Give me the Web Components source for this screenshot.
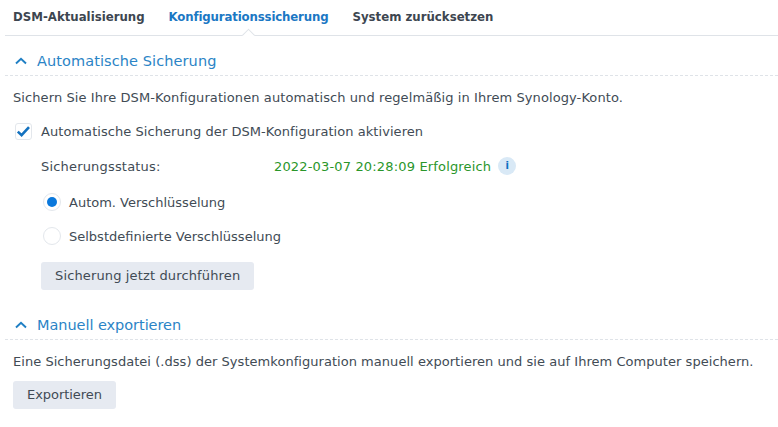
<!DOCTYPE html>
<html><head><meta charset="utf-8"><style>
html,body{margin:0;padding:0;background:#fff}
body{font-family:"DejaVu Sans",sans-serif;font-size:13px;color:#414b55;width:778px;height:427px;overflow:hidden}
</style></head><body>
<dsm-page>
<tab-bar>
<tab-item>DSM-Aktualisierung</tab-item>
<tab-item active style="letter-spacing:-.15px">Konfigurationssicherung</tab-item>
<tab-item>System zurücksetzen</tab-item>
</tab-bar>
<fold-section title="Automatische Sicherung" style="letter-spacing:.09px">
<text-line>Sichern Sie Ihre DSM-Konfigurationen automatisch und regelmäßig in Ihrem Synology-Konto.</text-line>
<check-row style="letter-spacing:.055px">Automatische Sicherung der DSM-Konfiguration aktivieren</check-row>
<status-row></status-row>
<radio-row checked style="letter-spacing:0">Autom. Verschlüsselung</radio-row>
<radio-row style="letter-spacing:0">Selbstdefinierte Verschlüsselung</radio-row>
<dsm-button indent style="letter-spacing:.14px">Sicherung jetzt durchführen</dsm-button>
</fold-section>
<fold-section title="Manuell exportieren" second style="letter-spacing:-.05px">
<text-line style="letter-spacing:.04px">Eine Sicherungsdatei (.dss) der Systemkonfiguration manuell exportieren und sie auf Ihrem Computer speichern.</text-line>
<dsm-button style="letter-spacing:-.05px">Exportieren</dsm-button>
</fold-section>
</dsm-page>
<script>
function def(name,html){customElements.define(name,class extends HTMLElement{constructor(){super();this.attachShadow({mode:'open'}).innerHTML=html}})}
def('dsm-page',`<style>:host{display:block;padding:0 0 0 5px;width:773px}</style><slot></slot>`);
def('tab-bar',`<style>:host{display:flex;height:35px;gap:24px;padding-left:8px;border-bottom:1px solid #dfe3e8}</style><slot></slot>`);
customElements.define('tab-item',class extends HTMLElement{constructor(){super();const a=this.hasAttribute('active');this.attachShadow({mode:'open'}).innerHTML=`<style>:host{display:block;position:relative;font-weight:700;font-size:11.75px;line-height:35px;color:${a?'#1b78c4':'#3d4650'}}
.n{position:absolute;left:50%;bottom:0;width:8px;height:8px;margin-left:-5px;transform:translateY(4.5px) rotate(45deg);background:#fff;border-left:1px solid #dfe3e8;border-top:1px solid #dfe3e8}</style><slot></slot>${a?'<span class="n"></span>':''}`}});
customElements.define('fold-section',class extends HTMLElement{constructor(){super();const s=this.hasAttribute('second');this.attachShadow({mode:'open'}).innerHTML=`<style>:host{display:block;margin-top:${s?'20px':'10px'}}
.h{display:flex;align-items:center;height:29px;border-bottom:1px dashed #dfe3e8;color:#2b84c6;font-size:14.5px;gap:10px;padding-left:10px}
svg{display:block}.b{padding:0 0 0 8px}</style>
<div class="h"><svg width="12" height="8" viewBox="0 0 12 8"><path d="M1 6.5 6 1.7l5 4.8" fill="none" stroke="#1f7fc4" stroke-width="1.9"/></svg><span>${this.getAttribute('title')}</span></div><div class="b"><slot></slot></div>`}});
def('text-line',`<style>:host{display:block;height:16px;line-height:16px;margin-top:14px;white-space:nowrap}</style><slot></slot>`);
def('check-row',`<style>:host{display:flex;align-items:center;gap:9px;margin-top:13px;height:24px;margin-left:2px;white-space:nowrap}
.b{width:17px;height:17px;box-sizing:border-box;border:1px solid #e3e7ec;border-radius:3px;display:block}</style>
<svg class="b" viewBox="0 0 15 15"><path d="M1.8 7.6 5.6 11.2 13 3.2" fill="none" stroke="#1472bf" stroke-width="2.6"/></svg><slot></slot>`);
def('status-row',`<style>:host{display:flex;align-items:center;height:22px;margin-top:12px;margin-left:28px;white-space:nowrap}
.l{width:233px;letter-spacing:.18px}.v{color:#2a962a;letter-spacing:.16px}.i{width:18px;height:18px;border-radius:50%;background:#d9e9f6;color:#0b6fc1;font:700 10px/18px "DejaVu Sans",sans-serif;text-align:center;margin-left:7px;letter-spacing:0}</style>
<span class="l">Sicherungsstatus:</span><span class="v">2022-03-07 20:28:09 Erfolgreich</span><span class="i">i</span>`);
customElements.define('radio-row',class extends HTMLElement{constructor(){super();const c=this.hasAttribute('checked');this.attachShadow({mode:'open'}).innerHTML=`<style>:host{display:flex;align-items:center;gap:8px;height:24px;margin:${c?'13':'10'}px 0 0 30px;white-space:nowrap}
.r{width:18px;height:18px;box-sizing:border-box;border:1px solid #e3e7ec;border-radius:50%;display:flex;align-items:center;justify-content:center}
.d{width:10px;height:10px;border-radius:50%;background:#0a78dc}</style><span class="r">${c?'<span class="d"></span>':''}</span><slot></slot>`}});
customElements.define('dsm-button',class extends HTMLElement{constructor(){super();this.attachShadow({mode:'open'}).innerHTML=`<style>:host{display:block;width:max-content;height:28px;line-height:28px;padding:0 14px;background:#e6eaf1;border-radius:3px;margin-top:${this.hasAttribute('indent')?'14px':'11px'};margin-left:${this.hasAttribute('indent')?'28px':'0'};white-space:nowrap}</style><slot></slot>`}});
</script>
</body></html>
